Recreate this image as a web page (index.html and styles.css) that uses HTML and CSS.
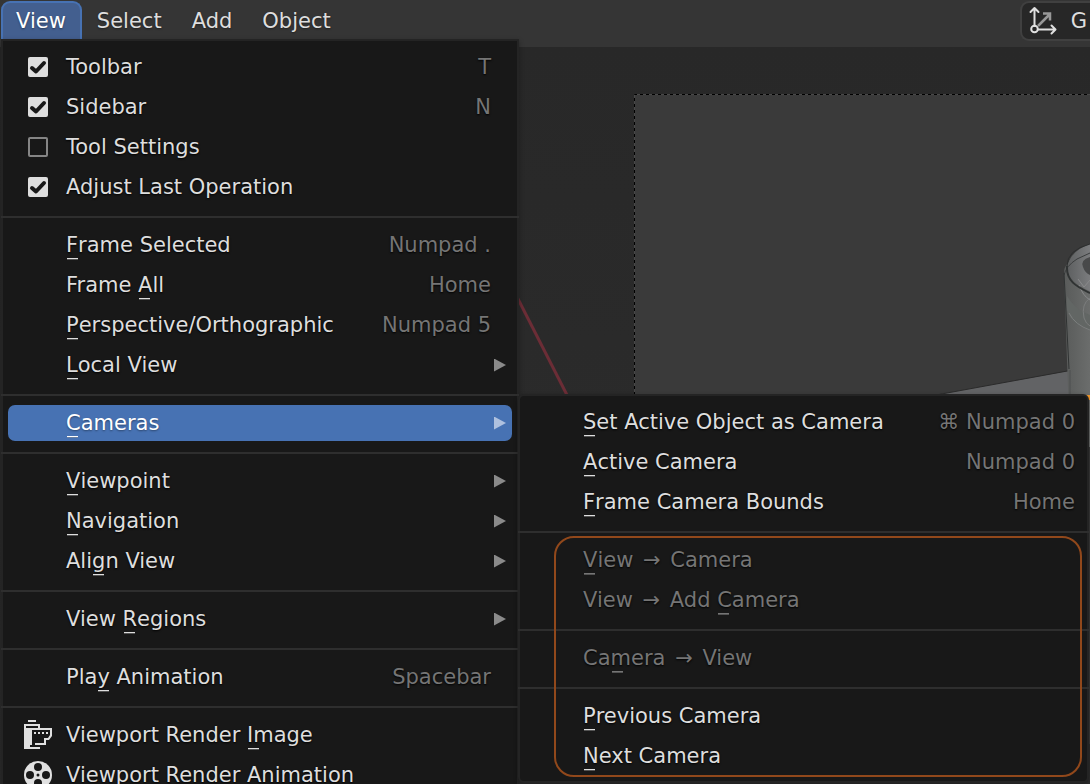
FILE: index.html
```html
<!DOCTYPE html>
<html lang="en">
<head>
<meta charset="utf-8">
<title>3D Viewport</title>
<link rel="stylesheet" href="styles.css">
</head>
<body>
<div class="app">
  <header class="header">
    <nav class="menubar">
      <button class="menubar-item open">View</button>
      <button class="menubar-item">Select</button>
      <button class="menubar-item">Add</button>
      <button class="menubar-item">Object</button>
    </nav>
    <button class="orientation">
      <svg width="30" height="30" viewBox="0 0 30 30" fill="none" stroke="#e0e0e0" stroke-width="2" stroke-linecap="round" stroke-linejoin="round">
        <path d="M10 20 21 9M15 7.500h7v7" stroke="#989898" stroke-width="2.500" stroke-linecap="butt" stroke-linejoin="miter"/>
        <path d="M6.500 20V3M2.500 6 6.500 2 10.500 6M10 23.500h17M23.500 19.500l4 4-4 4"/>
        <circle cx="6.500" cy="23" r="3.300"/>
      </svg>
      <span>G</span>
    </button>
  </header>

  <main class="viewport">
    <svg class="scene" width="100%" height="100%">
      <defs>
        <linearGradient id="glass" x1="0" x2="1" y1="0" y2="0">
          <stop offset="0" stop-color="#595b5a"/>
          <stop offset="1" stop-color="#6b6d6c"/>
        </linearGradient>
        <linearGradient id="rim" x1="0" x2="1" y1="0" y2="0">
          <stop offset="0" stop-color="#5e6061"/>
          <stop offset="1" stop-color="#7b7c7e"/>
        </linearGradient>
      </defs>
      <path d="M516 248 568 350" stroke="#6b2d36" stroke-width="3"/>
      <rect x="634" y="47" width="900" height="650" fill="#3a3a3a"/>
      <path d="M634.500 690V47.500H1600" fill="none" stroke="#484848"/>
      <path d="M634.500 690V47.500H1600" fill="none" stroke="#000" stroke-dasharray="3 3"/>
      <path d="M936 348 1090 320V400H936z" fill="#626365"/>
      <path d="M936 348 1070 323.500" stroke="#2b2b2b" stroke-width="1"/>
      <path d="M1064 226Q1064 220 1068 216 1074 204 1090 197V400H1070z" fill="url(#glass)"/>
      <path d="M1068 219Q1070 204 1090 197V244Q1066 234 1068 219z" fill="url(#rim)"/>
      <path d="M1090 210Q1080 213 1083 220 1085 226 1090 228z" fill="#48494a"/>
      <path d="M1067 249Q1075 263 1090 268V283Q1071 278 1067 263z" fill="#626664"/>
      <path d="M1069 266Q1075 278 1090 283M1090 251Q1081 257 1084 271 1086 277 1090 279" fill="none" stroke="#7b7d7d"/>
      <path d="M1078 232l6 8 6-7M1079 238q4 11 11 15" fill="none" stroke="#898a8b"/>
      <path d="M1067 219Q1067 203 1090 197" fill="none" stroke="#2c2e2e" stroke-width="1"/>
      <path d="M1064 228Q1066 219 1077 212L1090 206" fill="none" stroke="#3b3d3e" stroke-width="1"/>
      <path d="M1067 219C1066 235 1078 240 1090 246" fill="none" stroke="#303333" stroke-width="2"/>
      <path d="M1064 226 1069 322" fill="none" stroke="#303333" stroke-width="1"/>
      <path d="M1070 323V348" stroke="#555757" stroke-width="2"/>
      <path d="M1086 348H1090V353H1088z" fill="#f59a2c"/>
    </svg>
  </main>

  <div class="menu view-menu">
    <label class="item"><span class="check"><input type="checkbox" checked><svg width="20" height="20" viewBox="0 0 20 20"><path d="M4 11l4 3.500L16 6"/></svg></span><span class="label">Toolbar</span><kbd>T</kbd></label>
    <label class="item"><span class="check"><input type="checkbox" checked><svg width="20" height="20" viewBox="0 0 20 20"><path d="M4 11l4 3.500L16 6"/></svg></span><span class="label">Sidebar</span><kbd>N</kbd></label>
    <label class="item"><span class="check"><input type="checkbox"></span><span class="label">Tool Settings</span></label>
    <label class="item"><span class="check"><input type="checkbox" checked><svg width="20" height="20" viewBox="0 0 20 20"><path d="M4 11l4 3.500L16 6"/></svg></span><span class="label">Adjust Last Operation</span></label>
    <hr>
    <button class="item"><span class="label"><u>F</u>rame Selected</span><kbd>Numpad .</kbd></button>
    <button class="item"><span class="label">Frame <u>A</u>ll</span><kbd>Home</kbd></button>
    <button class="item"><span class="label"><u>P</u>erspective/Orthographic</span><kbd>Numpad 5</kbd></button>
    <button class="item"><span class="label"><u>L</u>ocal View</span><i class="arrow"></i></button>
    <hr>
    <button class="item active"><span class="label"><u>C</u>ameras</span><i class="arrow"></i></button>
    <hr>
    <button class="item"><span class="label"><u>V</u>iewpoint</span><i class="arrow"></i></button>
    <button class="item"><span class="label"><u>N</u>avigation</span><i class="arrow"></i></button>
    <button class="item"><span class="label">Ali<u>g</u>n View</span><i class="arrow"></i></button>
    <hr>
    <button class="item"><span class="label">View <u>R</u>egions</span><i class="arrow"></i></button>
    <hr>
    <button class="item"><span class="label">Pla<u>y</u> Animation</span><kbd>Spacebar</kbd></button>
    <hr>
    <button class="item">
      <svg class="icon" width="30" height="30" viewBox="0 0 30 30" fill="#e0e0e0">
        <path d="M5 0h8v2H5zM1 4h16v4h12v8l-3 4h-3v5H12v-2h9v-5h4l2-3v-5H9v15H7v2h10v2H1zM3 6v2h12V6z" fill-rule="evenodd"/>
        <path d="M6 9h3v16H6z"/>
        <path d="M11 12h2v2h-2zM15 12h2v2h-2zM19 12h2v2h-2zM23 12h2v2h-2z"/>
      </svg>
      <span class="label">Viewport Render <u>I</u>mage</span>
    </button>
    <button class="item">
      <svg class="icon" width="30" height="30" viewBox="0 0 30 30">
        <circle cx="15" cy="15" r="14" fill="#e0e0e0"/>
        <g fill="#181818"><circle cx="15" cy="7" r="4"/><circle cx="7" cy="15" r="4"/><circle cx="23" cy="15" r="4"/><circle cx="15" cy="23" r="4"/><circle cx="15" cy="15" r="1.500"/></g>
      </svg>
      <span class="label">Viewport Render Animation</span>
    </button>
  </div>

  <div class="menu camera-menu">
    <button class="item"><span class="label"><u>S</u>et Active Object as Camera</span><kbd>⌘ Numpad 0</kbd></button>
    <button class="item"><span class="label"><u>A</u>ctive Camera</span><kbd>Numpad 0</kbd></button>
    <button class="item"><span class="label"><u>F</u>rame Camera Bounds</span><kbd>Home</kbd></button>
    <hr>
    <div class="marked">
      <button class="item" disabled><span class="label"><u>V</u>iew <span class="to">→</span> Camera</span></button>
      <button class="item" disabled><span class="label">View <span class="to">→</span> Add <u>C</u>amera</span></button>
      <hr>
      <button class="item" disabled><span class="label">Ca<u>m</u>era <span class="to">→</span> View</span></button>
      <hr>
      <button class="item"><span class="label"><u>P</u>revious Camera</span></button>
      <button class="item"><span class="label"><u>N</u>ext Camera</span></button>
    </div>
  </div>
</div>
</body>
</html>
```
FILE: styles.css
```css
* {
  box-sizing: border-box;
}

body {
  margin: 0;
  font: 21px/26px "DejaVu Sans", sans-serif;
  color: #dedede;
}

button {
  font: inherit;
  color: inherit;
  background: none;
  border: 0;
  margin: 0;
  padding: 0;
  text-align: left;
}

.app {
  position: relative;
  display: flex;
  flex-direction: column;
  height: 100vh;
  overflow: hidden;
  background: #2b2b2b;
}

/* Header bar */
.header {
  display: flex;
  justify-content: space-between;
  align-items: flex-start;
  flex: none;
  height: 47px;
  padding: 1px 0 0 1px;
  background: #353535;
  overflow: hidden;
}

.menubar {
  display: flex;
}

.menubar-item {
  height: 38px;
  padding: 1px 15px 0;
  text-shadow: 0 1px 2px #0006;
}

.menubar-item.open {
  padding: 0 14px 1px 13px;
  color: #fff;
  background: #435f8f;
  border: 2px solid #4772b3;
  border-bottom: 0;
  border-radius: 9px 9px 0 0;
}

.orientation {
  display: flex;
  align-items: center;
  gap: 13px;
  height: 40px;
  padding: 0 3px 0 6px;
  background: #272727;
  border: 2px solid #404040;
  border-right: 0;
  border-radius: 9px 0 0 9px;
}

/* 3D scene */
.viewport {
  flex: 1;
  min-height: 0;
  background: linear-gradient(#282828, #2d2d2d);
}

.scene {
  display: block;
}

/* Pop-up menus */
.menu,
.marked {
  display: flex;
  flex-direction: column;
}

.menu {
  position: absolute;
  background: #181818;
  border: 2px solid #242424;
  box-shadow: 0 2px 5px #0005;
}

.view-menu {
  top: 39px;
  left: 1px;
  width: 518px;
  padding: 6px 0;
}

.camera-menu {
  top: 394px;
  left: 518px;
  right: 1px;
  padding: 6px 0 5px;
  border-radius: 6px;
}

.menu hr {
  flex: none;
  height: 2px;
  margin: 9px -2px 7px;
  border: 0;
  background: #2e2e2e;
}

.item {
  display: flex;
  flex: none;
  align-items: center;
  height: 40px;
  padding: 0 26px 0 63px;
  text-shadow: 0 1px 2px #000;
}

.label {
  flex: 1;
  white-space: nowrap;
}

.item:disabled {
  color: #757575;
}

.item kbd {
  font: inherit;
  color: #757575;
  white-space: nowrap;
}

.item.active {
  height: 36px;
  margin: 2px 5px;
  padding: 0 21px 0 58px;
  color: #fff;
  background: #4772b3;
  border-radius: 7px;
  text-shadow: 0 1px 2px #0006;
}

/* Access-key marker */
u {
  position: relative;
  text-decoration: none;
}

u::after {
  content: "";
  position: absolute;
  left: 1px;
  bottom: -2px;
  width: 11px;
  height: 1px;
  background: currentColor;
  box-shadow: 0 1px 0 #8888;
}

.to {
  margin: 0 3px;
}

.check {
  display: grid;
  width: 20px;
  height: 20px;
  margin: 0 18px 0 -38px;
}

.check > * {
  grid-area: 1 / 1;
}

.check input {
  appearance: none;
  width: 20px;
  height: 20px;
  margin: 0;
  border: 2px solid #858585;
  border-radius: 2px;
}

.check input:checked {
  background: #dedede;
  border-color: #dedede;
}

.check svg {
  fill: none;
  stroke: #181818;
  stroke-width: 4;
  stroke-linecap: round;
  stroke-linejoin: round;
  pointer-events: none;
}

.icon {
  flex: none;
  margin: 0 13px 0 -43px;
}

.arrow {
  width: 12px;
  height: 13px;
  margin-right: -15px;
  background: #8a8a8a;
  clip-path: polygon(0 0, 100% 50%, 0 100%);
}

.active .arrow {
  background: #afc1df;
}

/* Outlined group; its rules still run the full width of the menu */
.camera-menu .item {
  padding: 0 12px 0 63px;
}

.marked {
  position: relative;
}

.marked::after {
  content: "";
  position: absolute;
  inset: -4px 5px -1px 34px;
  border: 2px solid #91481b;
  border-radius: 20px;
  pointer-events: none;
}
```
